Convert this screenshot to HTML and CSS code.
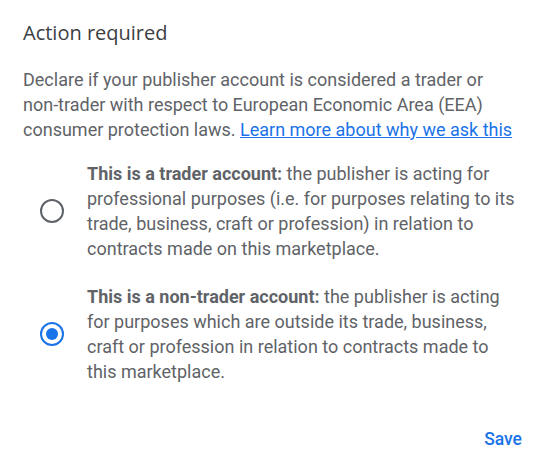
FILE: index.html
```html
<!DOCTYPE html>
<html>
<head>
<meta charset="utf-8">
<link rel="stylesheet" href="styles.css">
</head>
<body>
<div class="dialog">
  <h2 class="title">Action required</h2>
  <p class="intro">Declare if your publisher account is considered a trader or non-trader with respect to European Economic Area (EEA) consumer protection laws. <a class="link" href="#">Learn more about why we ask this</a></p>
  <div class="options">
    <label class="option">
      <span class="radio"></span>
      <span class="option-text"><b>This is a trader account:</b> the publisher is acting for professional purposes (i.e. for purposes relating to its trade, business, craft or profession) in relation to contracts made on this marketplace.</span>
    </label>
    <label class="option">
      <span class="radio checked"></span>
      <span class="option-text"><b>This is a non-trader account:</b> the publisher is acting for purposes which are outside its trade, business, craft or profession in relation to contracts made to this marketplace.</span>
    </label>
  </div>
  <div class="actions">
    <span class="save">Save</span>
  </div>
</div>
</body>
</html>
```
FILE: styles.css
```css
html, body {
  margin: 0;
  padding: 0;
  background: #fff;
}
.dialog {
  padding: 20px 24px 0 23px;
  font-family: Roboto, "Liberation Sans", sans-serif;
  color: #5f6368;
}
.title {
  margin: 0;
  font-family: "Open Sans", Roboto, sans-serif;
  font-size: 20px;
  font-weight: 400;
  line-height: 26px;
  color: #3c4043;
}
.intro {
  margin: 21px 0 0;
  font-size: 18px;
  line-height: 25px;
}
.link {
  color: #1a73e8;
  text-decoration: underline;
}
.options {
  margin-top: 19px;
  display: flex;
  flex-direction: column;
  gap: 23px;
}
.option {
  display: flex;
  align-items: center;
}
.radio {
  flex: none;
  width: 24px;
  height: 24px;
  box-sizing: border-box;
  border: 2px solid #5f6368;
  border-radius: 50%;
  margin: 0 23px 0 17px;
  position: relative;
}
.radio.checked {
  border-color: #1a73e8;
}
.radio.checked::after {
  content: "";
  position: absolute;
  left: 4px;
  top: 4px;
  width: 12px;
  height: 12px;
  border-radius: 50%;
  background: #1a73e8;
}
.option-text {
  font-size: 18px;
  line-height: 25px;
}
.option-text b {
  font-weight: 700;
}
.actions {
  display: flex;
  justify-content: flex-end;
  margin: 43px -2px 0 0;
}
.save {
  color: #1a73e8;
  font-size: 17.5px;
  font-weight: 500;
  line-height: 24px;
}
```
